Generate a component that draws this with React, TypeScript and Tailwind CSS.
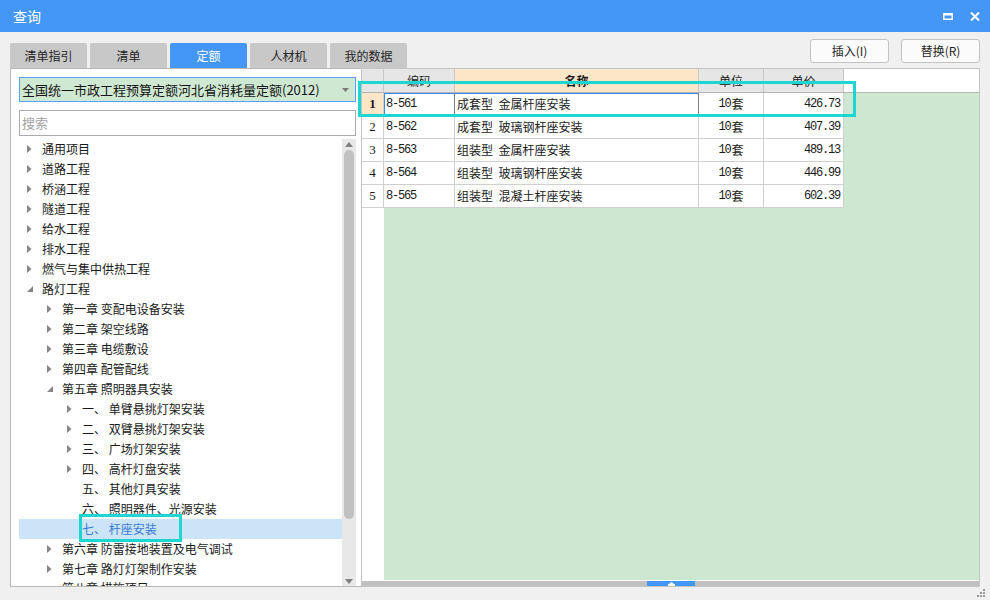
import React from 'react';

type Node = {
  level: number;
  label: string;
  arrow?: 'closed' | 'open';
  selected?: boolean;
};

const tabs = ['清单指引', '清单', '定额', '人材机', '我的数据'];

const tree: Node[] = [
  { level: 0, label: '通用项目', arrow: 'closed' },
  { level: 0, label: '道路工程', arrow: 'closed' },
  { level: 0, label: '桥涵工程', arrow: 'closed' },
  { level: 0, label: '隧道工程', arrow: 'closed' },
  { level: 0, label: '给水工程', arrow: 'closed' },
  { level: 0, label: '排水工程', arrow: 'closed' },
  { level: 0, label: '燃气与集中供热工程', arrow: 'closed' },
  { level: 0, label: '路灯工程', arrow: 'open' },
  { level: 1, label: '第一章 变配电设备安装', arrow: 'closed' },
  { level: 1, label: '第二章 架空线路', arrow: 'closed' },
  { level: 1, label: '第三章 电缆敷设', arrow: 'closed' },
  { level: 1, label: '第四章 配管配线', arrow: 'closed' },
  { level: 1, label: '第五章 照明器具安装', arrow: 'open' },
  { level: 2, label: '一、 单臂悬挑灯架安装', arrow: 'closed' },
  { level: 2, label: '二、 双臂悬挑灯架安装', arrow: 'closed' },
  { level: 2, label: '三、 广场灯架安装', arrow: 'closed' },
  { level: 2, label: '四、 高杆灯盘安装', arrow: 'closed' },
  { level: 2, label: '五、 其他灯具安装' },
  { level: 2, label: '六、 照明器件、光源安装' },
  { level: 2, label: '七、 杆座安装', selected: true },
  { level: 1, label: '第六章 防雷接地装置及电气调试', arrow: 'closed' },
  { level: 1, label: '第七章 路灯灯架制作安装', arrow: 'closed' },
];

const indent = ['pl-[8px]', 'pl-[28px]', 'pl-[48px]'];

const rows = [
  { no: 1, code: '8-561', name: '成套型  金属杆座安装', unit: '10', price: '426.73' },
  { no: 2, code: '8-562', name: '成套型  玻璃钢杆座安装', unit: '10', price: '407.39' },
  { no: 3, code: '8-563', name: '组装型  金属杆座安装', unit: '10', price: '489.13' },
  { no: 4, code: '8-564', name: '组装型  玻璃钢杆座安装', unit: '10', price: '446.99' },
  { no: 5, code: '8-565', name: '组装型  混凝土杆座安装', unit: '10', price: '602.39' },
];

function Arrow({ kind }: { kind?: 'closed' | 'open' }) {
  if (kind === 'closed') {
    return (
      <svg width="5" height="8" viewBox="0 0 5 8">
        <path d="M0 0 L4.5 4 L0 8 Z" fill="#858585" />
      </svg>
    );
  }
  if (kind === 'open') {
    return (
      <svg width="6" height="6" viewBox="0 0 6 6">
        <path d="M6 0 L6 6 L0 6 Z" fill="#858585" />
      </svg>
    );
  }
  return null;
}

// digits in the grid are narrow, like a bitmap song font
function Num({ children }: { children: React.ReactNode }) {
  return <span className="font-['Liberation_Mono',monospace] text-[12px] tracking-[-1.2px]">{children}</span>;
}

export default function App() {
  return (
    <div className="w-[990px] h-[600px] bg-[#f0f0f0] flex flex-col overflow-hidden font-['Noto_Sans_CJK_SC',sans-serif] text-[#1a1a1a]">
      {/* Title bar */}
      <div className="h-[32px] shrink-0 bg-[#4597f7] flex items-center pl-[13px] pr-[10px]">
        <span className="text-white text-[14px] leading-none">查询</span>
        <div className="ml-auto flex items-center gap-[17px]">
          <svg width="10" height="7" viewBox="0 0 10 7">
            <path d="M0 0 H10 V7 H0 Z M1.5 2.5 V5.5 H8.5 V2.5 Z" fill="#fff" fillRule="evenodd" />
          </svg>
          <svg width="10" height="9" viewBox="0 0 10 9">
            <path d="M1 0.5 L9 8.5 M9 0.5 L1 8.5" stroke="#fff" strokeWidth="2" />
          </svg>
        </div>
      </div>

      {/* Tabs and buttons */}
      <div className="h-[36px] shrink-0 flex px-[10px]">
        <div className="flex items-end gap-[3px]">
          {tabs.map((t) => (
            <div
              key={t}
              className={`h-[25px] w-[77px] rounded-t-[2px] flex items-center justify-center text-[12px] ${
                t === '定额' ? 'bg-[#4597f7] text-white' : 'bg-[#c8c8c8] text-[#262626]'
              }`}
            >
              {t}
            </div>
          ))}
        </div>
        <div className="ml-auto flex gap-[12px] pt-[7px]">
          <button className="h-[24px] w-[79px] bg-[#fbfbfb] border border-[#c3c3c3] rounded-[3px] text-[12px] text-[#262626]">
            插入(I)
          </button>
          <button className="h-[24px] w-[79px] bg-[#fbfbfb] border border-[#c3c3c3] rounded-[3px] text-[12px] text-[#262626]">
            替换(R)
          </button>
        </div>
      </div>

      {/* Main */}
      <div className="h-[519px] shrink-0 flex pl-[10px]">
        {/* Left panel */}
        <div className="w-[351px] h-full bg-white border-l border-t border-b border-[#bababa] flex flex-col pl-[8px] pr-[5px] pt-[8px]">
          <div className="h-[25px] shrink-0 bg-[#cee8d1] border border-[#57a2f5] flex items-center pl-[2px] pr-[6px] text-[13px] text-[#141414]">
            <span className="leading-none">全国统一市政工程预算定额河北省消耗量定额(2012)</span>
            <svg className="ml-auto" width="7" height="4" viewBox="0 0 7 4">
              <path d="M0 0 H7 L3.5 4 Z" fill="#7a7a7a" />
            </svg>
          </div>
          <div className="mt-[8px] h-[26px] shrink-0 border border-[#acacac] flex items-center pl-[2px] text-[13px] text-[#a3a3a3]">
            搜索
          </div>
          <div className="mt-[3px] flex-1 min-h-0 flex">
            <div className="flex-1 overflow-hidden">
              {tree.map((n) => (
                <div
                  key={n.label}
                  className={`relative h-[20px] flex items-center text-[12px] ${indent[n.level]} ${
                    n.selected ? 'bg-[#cce4f7] text-[#3b7bd6]' : ''
                  }`}
                >
                  <span className="w-[15px] flex items-center">
                    <Arrow kind={n.arrow} />
                  </span>
                  <span className="whitespace-pre leading-none">{n.label}</span>
                  {n.selected && (
                    <div className="absolute left-[60px] top-[-5px] w-[103px] h-[28px] border-[3px] border-[#1dd6d1]" />
                  )}
                </div>
              ))}
              {/* last row sits half under the panel's lower edge */}
              <div className="h-[7px] overflow-hidden pl-[28px] flex items-start">
                <span className="w-[15px]" />
                <span className="text-[12px] leading-[12px] pt-[3px]">第八章 措施项目</span>
              </div>
            </div>
            {/* vertical scrollbar */}
            <div className="w-[14px] bg-[#e8e8e8] flex flex-col items-center">
              <div className="h-[10px] flex items-center justify-center">
                <svg width="8" height="5" viewBox="0 0 8 5">
                  <path d="M0 5 L4 0 L8 5 Z" fill="#808080" />
                </svg>
              </div>
              <div className="mt-[1px] h-[369px] w-[10px] rounded-full bg-[#c1c1c1]" />
              <div className="flex-1" />
              <div className="h-[10px] flex items-center justify-center">
                <svg width="8" height="5" viewBox="0 0 8 5">
                  <path d="M0 0 L8 0 L4 5 Z" fill="#808080" />
                </svg>
              </div>
            </div>
          </div>
        </div>

        {/* Right panel */}
        <div className="relative w-[619px] h-full bg-white border border-[#c4c4c4] flex flex-col">
          {/* header */}
          <div className="h-[24px] shrink-0 flex border-b border-[#b4b4b4] text-[12px]">
            <div className="w-[22px] bg-[#e6e6e6] border-r border-[#c8c8c8]" />
            <div className="w-[71px] bg-[#e6e6e6] border-r border-[#c8c8c8] flex items-center justify-center">编码</div>
            <div className="w-[244px] bg-[#fde5c7] border-r border-[#c8c8c8] flex items-center justify-center font-bold">名称</div>
            <div className="w-[65px] bg-[#e6e6e6] border-r border-[#c8c8c8] flex items-center justify-center">单位</div>
            <div className="w-[80px] bg-[#e6e6e6] border-r border-[#c8c8c8] flex items-center justify-center">单价</div>
            <div className="flex-1" />
          </div>

          {/* body */}
          <div className="flex-1 min-h-0 flex pb-[1px] text-[12px]">
            <div className="w-[22px] flex flex-col">
              {rows.map((r) => (
                <div
                  key={r.no}
                  className={`h-[23px] border-r border-b border-[#d0d0d0] flex items-center justify-center font-['Liberation_Serif',serif] text-[13px] ${
                    r.no === 1 ? 'bg-[#fde5c7] font-bold' : ''
                  }`}
                >
                  {r.no}
                </div>
              ))}
            </div>
            <div className="flex-1 bg-[#cee7d0] flex flex-col">
              {rows.map((r) => {
                const first = r.no === 1;
                return (
                  <div key={r.no} className="h-[23px] flex">
                    <div
                      className={`w-[71px] bg-white border-b border-r flex items-center pl-[2px] ${
                        first ? 'border-[#d0d0d0] border-r-[#808080] shadow-[inset_1px_1px_0_#3b8cf0]' : 'border-[#d0d0d0]'
                      }`}
                    >
                      <Num>{r.code}</Num>
                    </div>
                    <div
                      className={`w-[244px] bg-white border-b border-r flex items-center pl-[2px] ${
                        first ? 'border-[#d0d0d0] border-r-[#808080] shadow-[inset_0_1px_0_#3b8cf0]' : 'border-[#d0d0d0]'
                      }`}
                    >
                      <span className="whitespace-pre leading-none">{r.name}</span>
                    </div>
                    <div className="w-[65px] bg-white border-b border-r border-[#d0d0d0] flex items-center justify-center">
                      <Num>{r.unit}</Num>
                      <span className="leading-none pl-[1px]">套</span>
                    </div>
                    <div className="w-[80px] bg-white border-b border-r border-[#d0d0d0] flex items-center justify-end pr-[3px]">
                      <Num>{r.price}</Num>
                    </div>
                  </div>
                );
              })}
            </div>
          </div>

          {/* horizontal scrollbar */}
          <div className="h-[5px] shrink-0 bg-[#c0c0c0] flex">
            <div className="ml-[285px] w-[48px] bg-[#4597f7] flex items-end justify-center">
              <svg width="7" height="4" viewBox="0 0 7 4">
                <path d="M3.5 0 L6 2 H7 V4 H0 V2 H1 Z" fill="#fff" />
              </svg>
            </div>
          </div>

          {/* annotation over the first row */}
          <div className="absolute left-[-4px] top-[12px] w-[498px] h-[36px] border-[3px] border-[#1dd6d1]" />
        </div>
      </div>

      {/* bottom strip with resize grip */}
      <div className="flex-1 flex justify-end items-end pr-[5px] pb-[3px]">
        <svg width="8" height="8" viewBox="0 0 8 8">
          <rect x="6" y="0" width="2" height="2" fill="#9a9a9a" />
          <rect x="3" y="3" width="2" height="2" fill="#9a9a9a" />
          <rect x="6" y="3" width="2" height="2" fill="#9a9a9a" />
          <rect x="0" y="6" width="2" height="2" fill="#9a9a9a" />
          <rect x="3" y="6" width="2" height="2" fill="#9a9a9a" />
          <rect x="6" y="6" width="2" height="2" fill="#9a9a9a" />
        </svg>
      </div>
    </div>
  );
}
